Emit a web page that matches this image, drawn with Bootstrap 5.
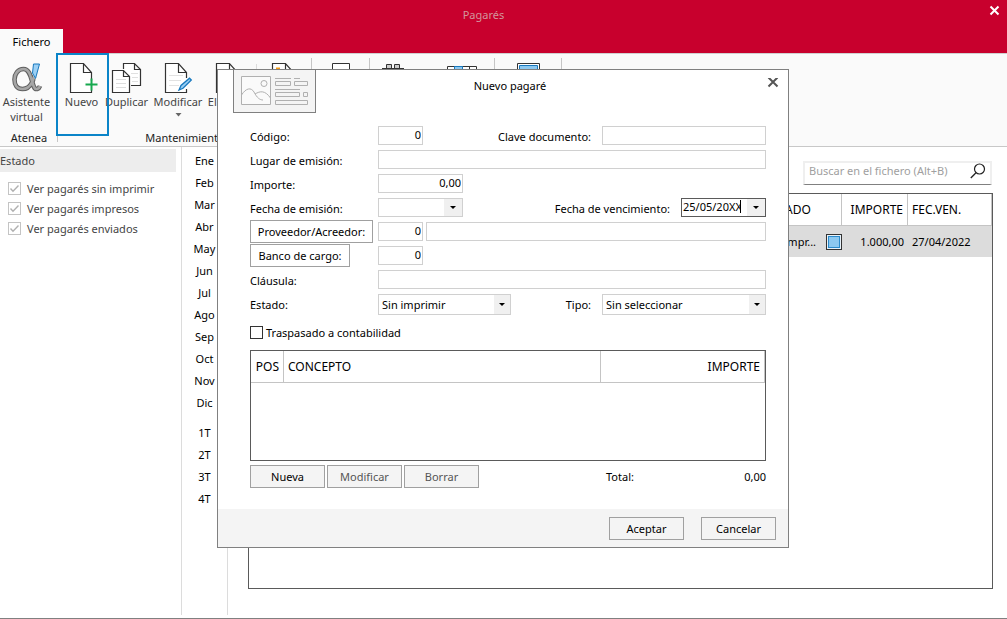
<!DOCTYPE html>
<html lang="es">
<head>
<meta charset="utf-8">
<meta name="viewport" content="width=device-width, initial-scale=1">
<title>Pagarés</title>
<link href="https://cdn.jsdelivr.net/npm/bootstrap@5.3.0/dist/css/bootstrap.min.css" rel="stylesheet">
<style>
  body { font-family: "Noto Sans", "Open Sans", sans-serif; font-size: 11px; line-height: 15px; color: #000; background: #fff; }
  button, input, select { font: inherit; color: inherit; }
  .app { min-height: 100vh; border-bottom: 1px solid #808080; }

  .titlebar { background: #c8002d; height: 53px; }
  .title-text { color: #d3959c; padding-right: 40px; height: 29px; }
  .tab-file { width: 63px; height: 25px; background: #fafafa; border: 0; margin-bottom: -1px; }
  .x-btn { background: none; border: 0; padding: 0; display: flex; }
  .x-app { top: 5px; right: 7px; }

  .ribbon { background: #fafafa; border-top: 1px solid #d0d0d0; border-bottom: 1px solid #c8c8c8; height: 94px; color: #444; }
  .rgroup { position: relative; height: 92px; }
  .rgroup::after { content: ""; position: absolute; right: 0; top: 4px; bottom: 4px; width: 1px; background: #c6c6c6; }
  .rbtn { background: none; border: 0; padding: 9px 0 0; display: flex; flex-direction: column; align-items: center; height: 76px; white-space: nowrap; }
  .rbtn svg { margin-bottom: 1px; flex: none; overflow: visible; }
  .rlabel { height: 16px; text-align: center; color: #222; }
  .w-a { width: 53px; } .w-b { width: 47px; } .w-c { width: 43px; } .w-d { width: 60px; } .w-e { width: 42px; }
  .g-atenea { width: 58px; } .g-mant { width: 254px; } .g-print { width: 58px; } .g-find { width: 125px; padding-left: 12px; gap: 43px; } .g-view { width: 67px; }
  .rsep { width: 1px; height: 66px; background: #dcdcdc; margin: 10px 6px 0; }
  .chosen::before { content: ""; position: absolute; inset: -1px -4px -6px -2px; border: 2px solid #0a84c8; z-index: 2; pointer-events: none; }

  .side { width: 182px; padding: 2px 5px 0 0; border-right: 1px solid #dcdcdc; }
  .side-head { background: #ededed; height: 23px; color: #444; margin-bottom: 6px; }
  .side-row { height: 20px; padding-left: 8px; gap: 6px; color: #444; }
  .tick { appearance: none; width: 13px; height: 13px; margin: 0; border: 1px solid #c4c4c4; background: #fff; }
  .tick:checked { background: url("data:image/svg+xml,%3Csvg xmlns='http://www.w3.org/2000/svg' viewBox='0 0 11 11'%3E%3Cpath d='M1.5 5.5 4 8.2 9.5 2.5' fill='none' stroke='%23b0b0b0' stroke-width='1.4'/%3E%3C/svg%3E"); }
  .months { width: 46px; border-right: 1px solid #dcdcdc; padding-top: 2px; }
  .months button { background: none; border: 0; padding: 0; height: 22px; }
  .bottom-gap { margin-bottom: 3px; }

  .content { padding: 14px 14px 29px 20px; }
  .search { width: 189px; height: 24px; border: 2px solid #efefef; border-bottom: 1px solid #808080; margin-right: 1px; }
  .search input { border: 0; outline: 0; padding: 0 0 0 4px; min-width: 0; background: none; }
  .search input::placeholder { color: #a0a0a0; opacity: 1; }
  .frame { border: 1px solid #5a5a5a; }
  .gridtable { width: 100%; table-layout: fixed; border-collapse: separate; border-spacing: 0; font-size: 12px; }
  .gridtable th { font-weight: 400; height: 32px; padding: 0 4px; border-right: 1px solid #c4c4c4; border-bottom: 1px solid #c4c4c4; white-space: nowrap; }
  .gridtable td { height: 31px; padding: 0 4px; background: #dcdcdc; white-space: nowrap; font-size: 11px; }
  .swatch { width: 16px; height: 16px; border: 1px solid #333; background: #8cc8f0; box-shadow: inset 0 0 0 1px #e8f2fa, inset 0 0 0 2px #2a8acb; }

  .overlay { inset: 0; padding: 0 1px 2px 0; z-index: 5; }
  .dialog { width: 572px; max-width: 100%; background: #fff; border: 1px solid #808080; }
  .dlg-head { display: grid; grid-template-columns: 100px 1fr 86px; height: 54px; }
  .thumb { width: 83px; height: 44px; margin: -1px 0 0 15px; border: 1px solid #808080; background: #f4f4f4; }
  .dlg-title { padding-top: 8px; text-align: center; }
  .dlg-body { padding: 0 22px 21px 32px; }
  .frow { height: 24px; display: flex; align-items: flex-start; }
  .frow > label { padding-top: 5px; }
  .lab { width: 128px; flex: none; }
  .lab2 { margin: 0 11px 0 auto; }
  .box { height: 19px; border: 1px solid #d0d0d0; border-radius: 0; padding: 0 1px 1px 3px; background: #fff; outline: 0; margin-top: 2px; min-width: 0; }
  .num { text-align: right; }
  .w45 { width: 45px; } .w85 { width: 85px; } .w133 { width: 133px; } .w160 { width: 160px; } .w164 { width: 164px; }
  .gap3 { margin-right: 3px; }
  .combo { height: 19px; border: 1px solid #d0d0d0; margin-top: 2px; }
  .combo.active { border-color: #5a5a5a; }
  .combo input { border: 0; outline: 0; padding: 0 0 1px 1px; min-width: 0; width: 58px; background: none; }
  .caret-bar { width: 1px; height: 13px; margin-top: 1px; background: #000; }
  .drop { border: 0; padding: 0; width: 18px; background: #f0f0f0; margin-left: auto; display: flex; align-items: center; justify-content: center; }
  select.box { appearance: none; height: 21px; padding-bottom: 0; background: #fff url("data:image/svg+xml,%3Csvg xmlns='http://www.w3.org/2000/svg' width='16' height='19'%3E%3Cpath fill='%23f0f0f0' d='M0 0h16v19H0z'/%3E%3Cpath d='M5 8h6L8 11z'/%3E%3C/svg%3E") right top no-repeat; }
  .flat { height: 23px; border: 1px solid #a0a0a0; background: #f4f4f4; width: 75px; padding: 0; }
  .flat:disabled { color: #555; }
  .flat.link-lab { background: #fff; }
  .w123 { width: 123px; } .w100 { width: 100px; }
  .tick.dark { border-color: #333; }
  .check-row { height: 34px; gap: 3px; }
  .lines { height: 111px; }
  .btns { gap: 2px; }
  .dlg-foot { background: #f4f4f4; padding: 8px 12px 7px; gap: 17px; }
</style>
</head>
<body>
<div class="app d-flex flex-column position-relative">
  <header class="titlebar d-flex flex-column justify-content-between position-relative">
    <div class="title-text d-flex align-items-center justify-content-center">Pagarés</div>
    <button class="x-btn x-app position-absolute" aria-label="Cerrar"><svg width="11" height="11" viewBox="0 0 11 11"><path d="M1.500 1.500l8 8M9.500 1.500l-8 8" stroke="#fff" stroke-width="2"/></svg></button>
    <button class="tab-file text-center">Fichero</button>
  </header>

  <nav class="ribbon d-flex" aria-label="Fichero">
    <div class="rgroup g-atenea">
      <button class="rbtn w-a"><svg width="30" height="30" viewBox="0 0 30 30">
        <path d="M24 6C22 15 20 26 10.500 26C5 26 2.500 22 2.500 16.500S6 6 11.500 6C19 6 19 18 22 24C23.500 27.500 27 26 28 23" fill="none" stroke="#5f5f5f" stroke-width="4.600"/>
        <path d="M24 6C22 15 20 26 10.500 26C5 26 2.500 22 2.500 16.500S6 6 11.500 6C19 6 19 18 22 24C23.500 27.500 27 26 28 23" fill="none" stroke="#a6a6a6" stroke-width="2.600"/>
        <path d="M20 0H28.500L24 17 20 11z" fill="#fafafa"/>
        <path d="M21.500 1H27.500L23.500 15.500 20.500 10z" fill="#9bd0f5" stroke="#1878be"/></svg>Asistente<br>virtual</button>
      <div class="rlabel">Atenea</div>
    </div>
    <div class="rgroup g-mant">
      <div class="d-flex">
        <button class="rbtn w-b chosen position-relative"><svg width="26" height="30" viewBox="0 0 26 30"><path d="M22.500 18V9.500L14.500 .5H1.500V29.500H22.500V27M14.500 .5V9.500H22.500" fill="#fff" stroke="#333" stroke-width="1.200"/><path d="M22.500 15.500V27.500M16.500 21.500H28.500" stroke="#16a84e" stroke-width="2"/></svg>Nuevo</button>
        <button class="rbtn w-c"><svg width="30" height="30" viewBox="0 0 30 30"><path d="M11.500 6V.5H22.500L28.500 6.500V22.500H19M22.500 .5V6.500H28.500" fill="#fff" stroke="#333" stroke-width="1.200"/><path d="M19 10.500h7M20 14.500h6M20 18.500h6" stroke="#e0e0e0"/><path d="M.5 7.500H11.500L17.500 13.500V29.500H.5zM11.500 7.500V13.500H17.500" fill="#fff" stroke="#333" stroke-width="1.200"/><path d="M4 16.500h10M4 20.500h10M4 24.500h10" stroke="#ddd"/></svg>Duplicar</button>
        <button class="rbtn w-d"><svg width="28" height="30" viewBox="0 0 28 30"><path d="M22.500 15V9.500L14.500 .5H1.500V29.500H22.500V26M14.500 .5V9.500H22.500" fill="#fff" stroke="#333" stroke-width="1.200"/><path d="M5 12.500h14M5 17.500h12M5 22.500h10" stroke="#e2e2e2"/><path d="M15 27L17 22.500 25.500 15.200 27.300 17 19 25.300z" fill="#9bd0f5" stroke="#1878be" stroke-width="1.300"/></svg>Modificar<svg class="mt-1" width="7" height="4" viewBox="0 0 7 4"><path d="M.5 0h6L3.500 3.500z" fill="#666"/></svg></button>
        <button class="rbtn w-e"><svg width="28" height="30" viewBox="0 0 28 30"><path d="M22.500 29.500V9.500L14.500 .5H1.500V29.500zM14.500 .5V9.500H22.500" fill="#fff" stroke="#333" stroke-width="1.200"/></svg>Eliminar</button>
        <span class="rsep"></span>
        <button class="rbtn w-c" aria-label="Enviar"><svg width="28" height="30" viewBox="0 0 28 30"><path d="M22.500 29.500V9.500L14.500 .5H1.500V29.500zM14.500 .5V9.500H22.500" fill="#fff" stroke="#333" stroke-width="1.200"/><path d="M5 4.500h4v4h-4z" fill="#f59a13"/></svg></button>
      </div>
      <div class="rlabel">Mantenimiento</div>
    </div>
    <div class="rgroup g-print d-flex justify-content-center">
      <button class="rbtn" aria-label="Imprimir"><svg width="20" height="30" viewBox="0 0 20 30"><path d="M1.500 .5h17V20h-17z" fill="#fff" stroke="#333"/></svg></button>
    </div>
    <div class="rgroup g-find d-flex">
      <button class="rbtn" aria-label="Buscar"><svg width="22" height="30" viewBox="0 0 22 30"><path d="M4.500 5V1.500h5V5M12.500 5V1.500h5V5M0 5.500h22" fill="#ccc" stroke="#333"/></svg></button>
      <button class="rbtn" aria-label="Fichero"><svg width="30" height="30" viewBox="0 0 30 30"><path d="M.5 3.500h29V25H.5z" fill="#fff" stroke="#333"/><path d="M7.500 3.500h8V25h-8z" fill="#8cc8f0" stroke="#1878be"/><path d="M22.500 3.500V25" stroke="#333"/></svg></button>
    </div>
    <div class="rgroup g-view d-flex justify-content-center">
      <button class="rbtn" aria-label="Vista"><svg width="23" height="30" viewBox="0 0 23 30"><path d="M.5 .5h22V25H.5z" fill="#fff" stroke="#333"/><path d="M2.500 2.500h18V25h-18z" fill="#8cc8f0" stroke="#1878be"/></svg></button>
    </div>
  </nav>

  <div class="d-flex flex-grow-1">
    <aside class="side flex-shrink-0 bottom-gap">
      <div class="side-head d-flex align-items-center">Estado</div>
      <label class="side-row d-flex align-items-center"><input class="tick" type="checkbox" checked>Ver pagarés sin imprimir</label>
      <label class="side-row d-flex align-items-center"><input class="tick" type="checkbox" checked>Ver pagarés impresos</label>
      <label class="side-row d-flex align-items-center"><input class="tick" type="checkbox" checked>Ver pagarés enviados</label>
    </aside>
    <div class="months d-flex flex-column flex-shrink-0 bottom-gap">
      <button>Ene</button><button>Feb</button><button>Mar</button><button>Abr</button><button>May</button><button>Jun</button><button>Jul</button><button>Ago</button><button>Sep</button><button>Oct</button><button>Nov</button><button class="mb-2">Dic</button>
      <button>1T</button><button>2T</button><button>3T</button><button>4T</button>
    </div>
    <main class="content flex-grow-1 d-flex flex-column">
      <div class="search d-flex align-items-start ms-auto mb-2">
        <input class="flex-grow-1" type="search" placeholder="Buscar en el fichero (Alt+B)" aria-label="Buscar en el fichero">
        <svg class="me-1" width="16" height="16" viewBox="0 0 16 16"><circle cx="9.500" cy="6" r="5" fill="none" stroke="#222" stroke-width="1.200"/><path d="M6 9.800L.8 15" stroke="#222" stroke-width="1.300"/></svg>
      </div>
      <div class="frame flex-grow-1">
        <table class="gridtable">
          <colgroup><col><col style="width:80px"><col style="width:66px"><col style="width:84px"></colgroup>
          <thead><tr><th></th><th>ESTADO</th><th class="text-end">IMPORTE</th><th>FEC.VEN.</th></tr></thead>
          <tbody><tr><td></td><td class="pe-0"><div class="d-flex align-items-center justify-content-between">Sin impr...<span class="swatch"></span></div></td><td class="text-end">1.000,00</td><td>27/04/2022</td></tr></tbody>
        </table>
      </div>
    </main>
  </div>

  <div class="overlay position-absolute d-flex align-items-center justify-content-center">
    <form class="dialog" role="dialog" aria-labelledby="dlg-title" onsubmit="return false">
      <div class="dlg-head">
        <div class="thumb"><svg width="81" height="42" viewBox="0 0 81 42" fill="none" stroke="#b0b0b0"><path d="M7.500 6.500h29v28h-29z" fill="#fafafa"/><circle cx="30" cy="13.500" r="3"/><path d="M7.500 25C12 18 17 17 20 22C23 28 26 30 29 30M21 24C26 21 31 20 36.500 28M41 8.500h16M60 8.500h6M41.500 11.500h15v4h-15zM60.500 11.500h13v4h-13zM41 19.500h25M41.500 22.500h24v4h-24zM69.500 22.500h4v4h-4zM41.500 30.500h32v4h-32z"/></svg></div>
        <div class="dlg-title" id="dlg-title">Nuevo pagaré</div>
        <button type="button" class="x-btn justify-content-end pe-2 align-items-start" aria-label="Cerrar"><svg class="mt-2" width="13" height="12" viewBox="0 0 13 12"><path d="M1.500 -.5l9 9M10.500 -.5l-9 9" stroke="#555" stroke-width="2" overflow="visible"/></svg></button>
      </div>
      <div class="dlg-body">
        <div class="frow"><label class="lab" for="f-cod">Código:</label><input class="box num w45" id="f-cod" value="0"><label class="lab2" for="f-clave">Clave documento:</label><input class="box w164" id="f-clave"></div>
        <div class="frow"><label class="lab" for="f-lugar">Lugar de emisión:</label><input class="box flex-grow-1" id="f-lugar"></div>
        <div class="frow"><label class="lab" for="f-imp">Importe:</label><input class="box num w85" id="f-imp" value="0,00"></div>
        <div class="frow"><label class="lab" for="f-emi">Fecha de emisión:</label>
          <div class="combo w85 d-flex"><input id="f-emi"><button type="button" class="drop" aria-label="Abrir calendario"><svg width="6" height="3"><path d="M0 0h6L3 3z"/></svg></button></div>
          <label class="lab2" for="f-ven">Fecha de vencimiento:</label>
          <div class="combo active w85 d-flex"><input id="f-ven" value="25/05/20XX"><span class="caret-bar"></span><button type="button" class="drop" aria-label="Abrir calendario"><svg width="6" height="3"><path d="M0 0h6L3 3z"/></svg></button></div></div>
        <div class="frow"><div class="lab"><button type="button" class="flat link-lab w123">Proveedor/Acreedor:</button></div><input class="box num w45 gap3" value="0" aria-label="Código de proveedor"><input class="box flex-grow-1" aria-label="Nombre de proveedor"></div>
        <div class="frow"><div class="lab"><button type="button" class="flat link-lab w100">Banco de cargo:</button></div><input class="box num w45" value="0" aria-label="Código de banco"></div>
        <div class="frow"><label class="lab" for="f-cla">Cláusula:</label><input class="box flex-grow-1" id="f-cla"></div>
        <div class="frow"><label class="lab" for="f-est">Estado:</label><select class="box w133" id="f-est"><option>Sin imprimir</option></select><label class="lab2" for="f-tipo">Tipo:</label><select class="box w164" id="f-tipo"><option>Sin seleccionar</option></select></div>
        <label class="check-row d-flex align-items-center"><input type="checkbox" class="tick dark">Traspasado a contabilidad</label>
        <div class="frame lines mb-1">
          <table class="gridtable">
            <colgroup><col style="width:33px"><col><col style="width:164px"></colgroup>
            <thead><tr><th class="text-end">POS</th><th>CONCEPTO</th><th class="text-end">IMPORTE</th></tr></thead>
          </table>
        </div>
        <div class="btns d-flex align-items-center">
          <button type="button" class="flat">Nueva</button><button type="button" class="flat" disabled>Modificar</button><button type="button" class="flat" disabled>Borrar</button>
          <div class="w160 d-flex justify-content-between ms-auto"><span>Total:</span><span>0,00</span></div>
        </div>
      </div>
      <div class="dlg-foot d-flex justify-content-end"><button type="submit" class="flat">Aceptar</button><button type="button" class="flat">Cancelar</button></div>
    </form>
  </div>
</div>
<script src="https://cdn.jsdelivr.net/npm/bootstrap@5.3.0/dist/js/bootstrap.bundle.min.js"></script>
</body>
</html>
